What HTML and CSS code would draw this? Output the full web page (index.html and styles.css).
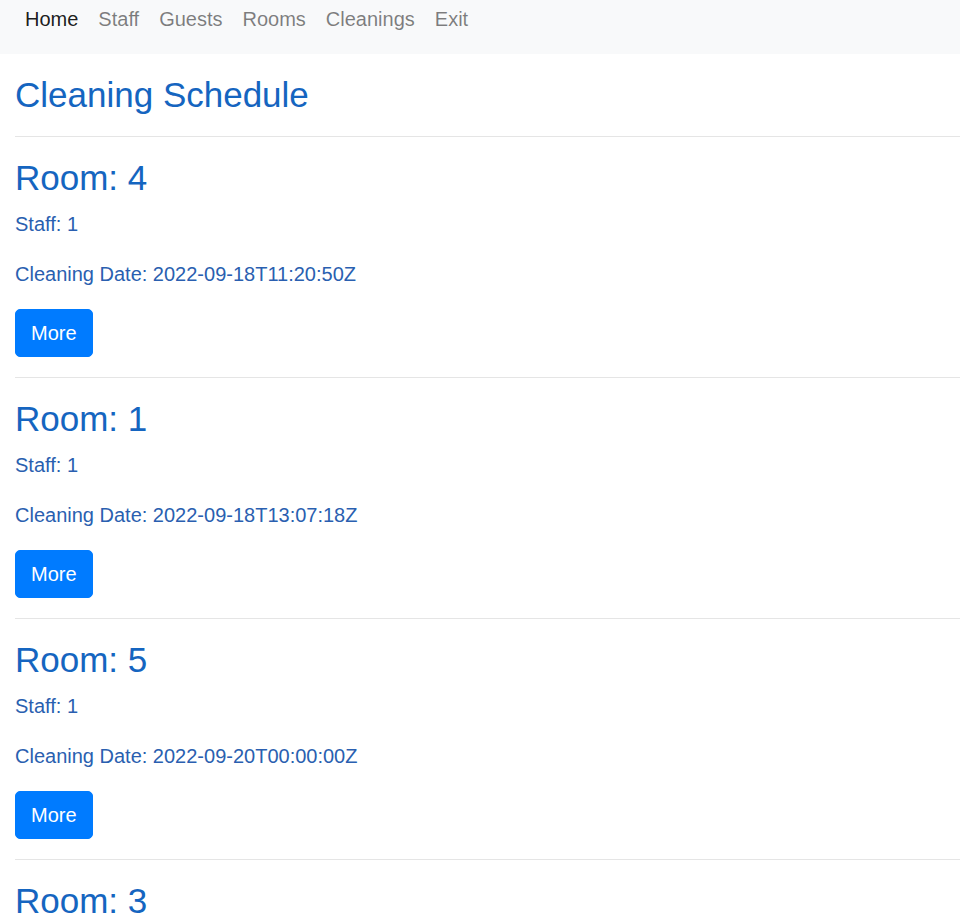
FILE: index.html
```html
<!DOCTYPE html>
<html lang="en">
<head>
<meta charset="utf-8">
<title>Cleaning Schedule</title>
<link rel="stylesheet" href="styles.css">
</head>
<body>
<nav class="navbar">
  <ul class="nav-list">
    <li><a class="nav-link active" href="#">Home</a></li>
    <li><a class="nav-link" href="#">Staff</a></li>
    <li><a class="nav-link" href="#">Guests</a></li>
    <li><a class="nav-link" href="#">Rooms</a></li>
    <li><a class="nav-link" href="#">Cleanings</a></li>
    <li><a class="nav-link" href="#">Exit</a></li>
  </ul>
</nav>
<main class="content">
  <h3 class="heading">Cleaning Schedule</h3>
  <hr class="divider">
  <section class="entry">
    <h3 class="heading">Room: 4</h3>
    <p class="info">Staff: 1</p>
    <p class="info">Cleaning Date: 2022-09-18T11:20:50Z</p>
    <a class="btn" href="#">More</a>
  </section>
  <hr class="divider">
  <section class="entry">
    <h3 class="heading">Room: 1</h3>
    <p class="info">Staff: 1</p>
    <p class="info">Cleaning Date: 2022-09-18T13:07:18Z</p>
    <a class="btn" href="#">More</a>
  </section>
  <hr class="divider">
  <section class="entry">
    <h3 class="heading">Room: 5</h3>
    <p class="info">Staff: 1</p>
    <p class="info">Cleaning Date: 2022-09-20T00:00:00Z</p>
    <a class="btn" href="#">More</a>
  </section>
  <hr class="divider">
  <section class="entry">
    <h3 class="heading">Room: 3</h3>
    <p class="info">Staff: 1</p>
    <p class="info">Cleaning Date: 2022-09-20T00:00:00Z</p>
    <a class="btn" href="#">More</a>
  </section>
</main>
</body>
</html>
```

FILE: styles.css
```css
html, body {
  margin: 0;
  padding: 0;
}
body {
  font-family: "Liberation Sans", Arial, sans-serif;
  font-size: 20px;
  line-height: 1.5;
  background: #fff;
  overflow: hidden;
}
.navbar {
  background: #f8f9fa;
  height: 54px;
  padding: 4px 15px 0;
  box-sizing: border-box;
}
.nav-list {
  list-style: none;
  margin: 0;
  padding: 0;
  display: flex;
}
.nav-link {
  display: block;
  padding: 0 10px;
  line-height: 30px;
  color: rgba(0, 0, 0, 0.5);
  text-decoration: none;
}
.nav-link.active {
  color: rgba(0, 0, 0, 0.9);
}
.content {
  padding: 20px 0 0 15px;
}
.heading {
  font-size: 35px;
  font-weight: 400;
  line-height: 42px;
  margin: 0 0 10px;
  color: #1565c0;
}
.divider {
  border: 0;
  border-top: 1px solid rgba(0, 0, 0, 0.1);
  margin: 20px 0;
  height: 0;
}
.info {
  margin: 0 0 20px;
  color: #2a5fb0;
}
.btn {
  display: inline-block;
  padding: 8px 15px;
  line-height: 30px;
  border: 1px solid #007bff;
  border-radius: 5px;
  background: #007bff;
  color: #fff;
  text-decoration: none;
  vertical-align: top;
}
```
